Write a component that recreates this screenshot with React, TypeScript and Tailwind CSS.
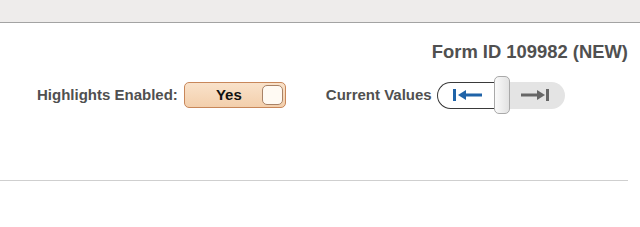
import React from "react";

function ArrowToStart({ color }: { color: string }) {
  return (
    <svg width="29" height="14" viewBox="0 0 29 14">
      <rect x="0" y="1" width="3" height="12" fill={color} />
      <path d="M5 7 L13 2 L13 12 Z" fill={color} />
      <rect x="11" y="5.5" width="18" height="3" fill={color} />
    </svg>
  );
}

function ArrowToEnd({ color }: { color: string }) {
  return (
    <svg width="29" height="14" viewBox="0 0 29 14">
      <rect x="0" y="5.5" width="18" height="3" fill={color} />
      <path d="M24 7 L16 2 L16 12 Z" fill={color} />
      <rect x="25" y="1" width="3" height="12" fill={color} />
    </svg>
  );
}

export default function App() {
  return (
    <div className="w-[640px] h-[227px] bg-white font-['Liberation_Sans',Arial,sans-serif]">
      <div className="h-[23px] bg-[#eeeceb] border-b border-[#a3a3a3]" />

      <div className="w-[628px] h-[158px] border-b border-[#cfcfcf] flex flex-col">
        <div className="mt-[18px] flex justify-end">
          <p className="text-[18.4px] leading-[21px] font-bold text-[#505050]">
            Form ID 109982 (NEW)
          </p>
        </div>

        <div className="mt-[14px] h-[38px] flex items-center pl-[37px]">
          <span className="text-[15px] font-bold text-[#505050]">
            Highlights Enabled:
          </span>

          <div className="relative ml-[6px] w-[102px] h-[26px] rounded-[5px] border border-[#c8875a] bg-gradient-to-b from-[#f9e2ca] to-[#f3cfac] flex items-center">
            <span className="w-[88px] text-center text-[15px] font-bold text-[#111]">
              Yes
            </span>
            <span className="absolute right-[2px] top-[2px] w-[21px] h-[20px] rounded-[5px] border border-[#a88266] bg-[#fffaf3]" />
          </div>

          <span className="ml-[40px] text-[15px] font-bold text-[#505050]">
            Current Values
          </span>

          <div className="relative ml-[5px] h-[38px] flex items-center">
            <div className="w-[65px] h-[27px] rounded-l-full border border-r-0 border-[#3a3a3a] bg-white flex items-center pl-[15px]">
              <ArrowToStart color="#1f63a8" />
            </div>
            <div className="w-[63px] h-[27px] rounded-r-full bg-[#e4e4e4] flex items-center pl-[19px]">
              <ArrowToEnd color="#666666" />
            </div>
            <span className="absolute left-[57px] top-0 w-[16px] h-[38px] rounded-[5px] border border-[#a9a9a9] bg-gradient-to-r from-[#fafafa] to-[#e2e2e2]" />
          </div>
        </div>
      </div>
    </div>
  );
}
